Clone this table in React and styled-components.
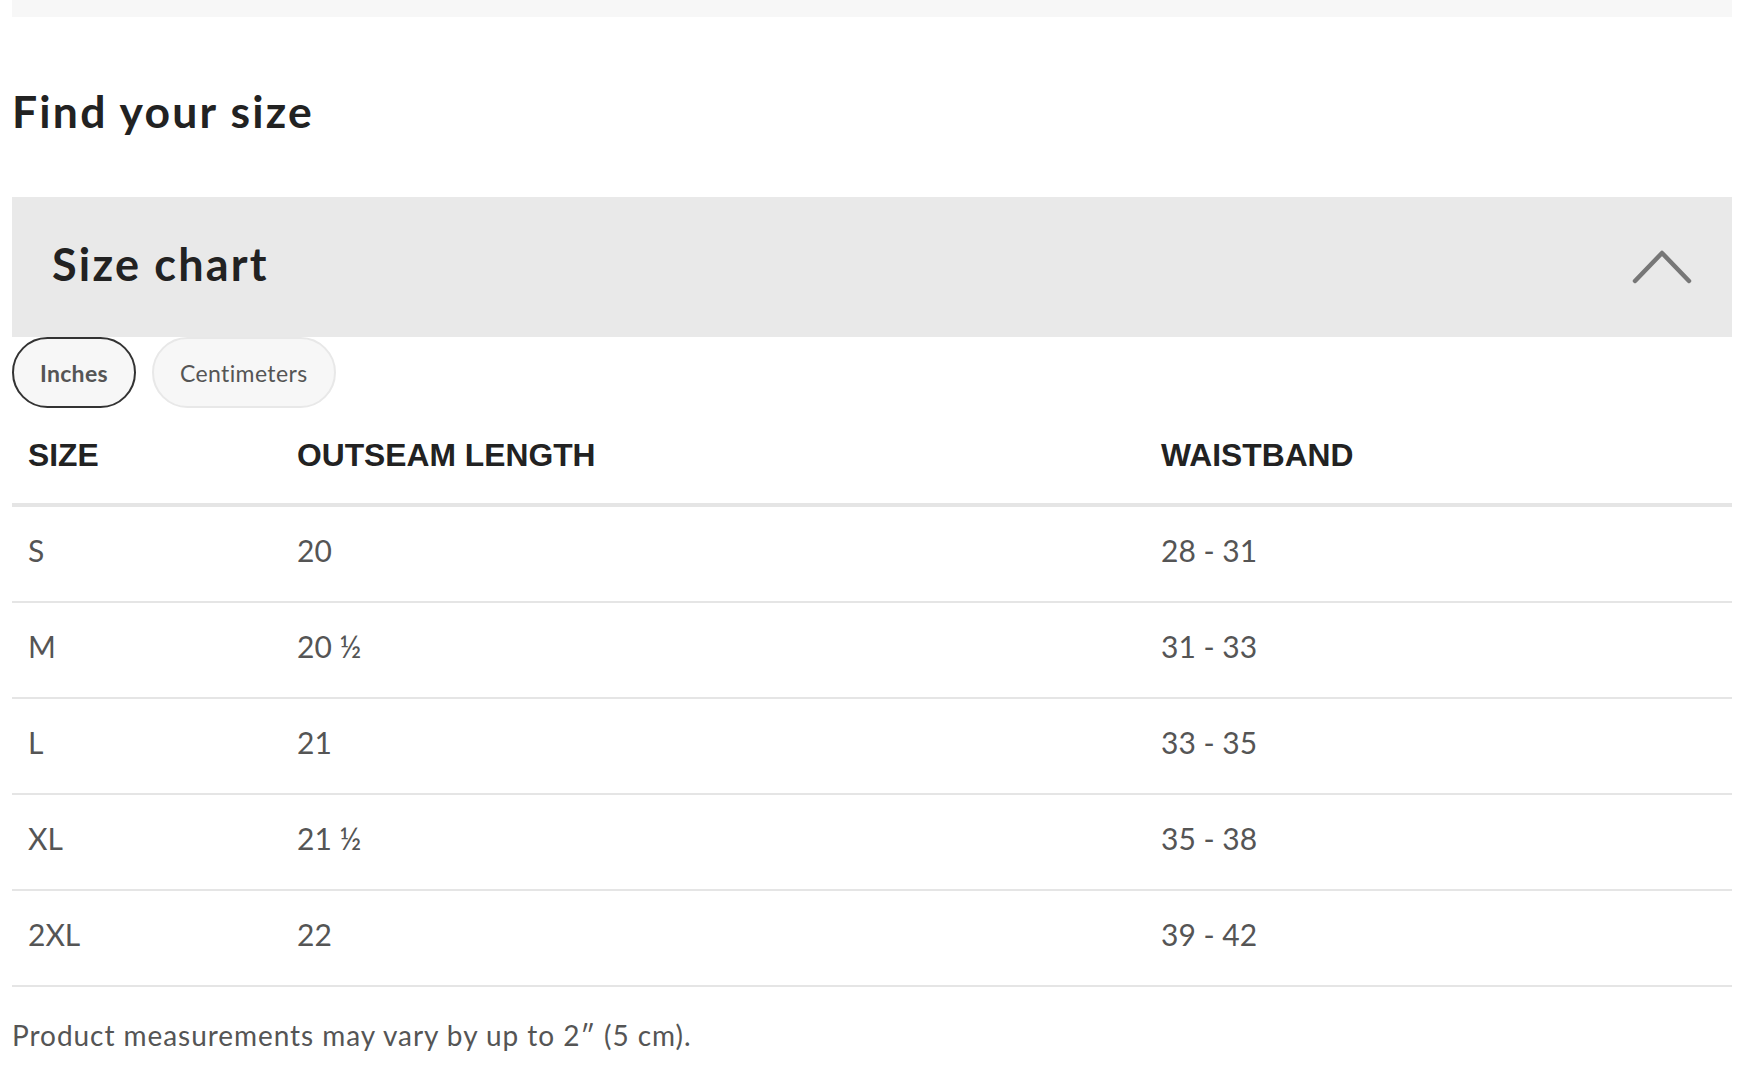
import React, { useState } from "react";
import styled, { createGlobalStyle } from "styled-components";

const GlobalStyle = createGlobalStyle`
  html, body { margin: 0; padding: 0; background: #ffffff; }
  body { font-family: Lato, "Open Sans", Arial, sans-serif; color: #222; }
  * { box-sizing: border-box; }
`;

const Page = styled.div`
  padding: 0 12px;
  display: flex;
  flex-direction: column;
`;

const TopBar = styled.div`
  height: 17px;
  background: #f7f7f7;
`;

const Title = styled.h2`
  margin: 67px 0 0 0;
  font-family: Lato, sans-serif;
  font-weight: 700;
  font-size: 44.5px;
  line-height: 1.2;
  color: #222;
  letter-spacing: 2.2px;
`;

const AccordionHeader = styled.div`
  margin-top: 60px;
  height: 140px;
  background: #e9e9e9;
  display: flex;
  align-items: center;
  justify-content: space-between;
  padding: 0 40px 0 40px;
`;

const AccordionTitle = styled.h3`
  margin: 0 0 7px 0;
  font-family: Lato, sans-serif;
  font-weight: 700;
  font-size: 45px;
  line-height: 1.2;
  color: #222;
  letter-spacing: 2.2px;
`;

const Chevron = styled.svg`
  width: 60px;
  height: 36px;
  display: block;
`;

const ToggleRow = styled.div`
  display: flex;
  gap: 16px;
`;

const Toggle = styled.button`
  height: 71px;
  padding: 0 26px;
  border-radius: 36px;
  background: #f7f7f7;
  border: ${(p) => (p.$active ? "2px solid #333" : "2px solid #e8e8e8")};
  font-family: Lato, sans-serif;
  font-size: 23px;
  font-weight: ${(p) => (p.$active ? 700 : 400)};
  letter-spacing: ${(p) => (p.$active ? "0.3px" : "0.4px")};
  color: #555;
  cursor: pointer;
`;

const Table = styled.div`
  display: flex;
  flex-direction: column;
`;

const Row = styled.div`
  display: grid;
  grid-template-columns: 269px 864px 1fr;
  align-items: center;
  height: ${(p) => (p.$head ? "99px" : "96px")};
  border-bottom: ${(p) => (p.$head ? "4px" : "2px")} solid #e5e5e5;
`;

const HeadCell = styled.div`
  padding-left: 16px;
  font-family: "Liberation Sans", Arial, sans-serif;
  font-weight: 700;
  font-size: 31.8px;
  color: #222;
`;

const Cell = styled.div`
  padding: 0 0 8px 16px;
  font-family: Lato, sans-serif;
  font-size: 30px;
  color: #555;
`;

const Note = styled.p`
  margin: 32px 0 0 0;
  font-family: Lato, sans-serif;
  font-size: 28px;
  line-height: 1.2;
  letter-spacing: 0.95px;
  color: #555;
`;

const rows = [
  ["S", "20", "28 - 31"],
  ["M", "20 ½", "31 - 33"],
  ["L", "21", "33 - 35"],
  ["XL", "21 ½", "35 - 38"],
  ["2XL", "22", "39 - 42"],
];

export default function App() {
  const [unit, setUnit] = useState("in");
  return (
    <>
      <GlobalStyle />
      <Page>
        <TopBar />
        <Title>Find your size</Title>
        <AccordionHeader>
          <AccordionTitle>Size chart</AccordionTitle>
          <Chevron viewBox="0 0 60 36" fill="none">
            <polyline
              points="3,32 30,4 57,32"
              stroke="#777"
              strokeWidth="4.5"
              strokeLinecap="round"
              strokeLinejoin="round"
            />
          </Chevron>
        </AccordionHeader>
        <ToggleRow>
          <Toggle $active={unit === "in"} onClick={() => setUnit("in")}>
            Inches
          </Toggle>
          <Toggle $active={unit === "cm"} onClick={() => setUnit("cm")}>
            Centimeters
          </Toggle>
        </ToggleRow>
        <Table>
          <Row $head>
            <HeadCell>SIZE</HeadCell>
            <HeadCell>OUTSEAM LENGTH</HeadCell>
            <HeadCell>WAISTBAND</HeadCell>
          </Row>
          {rows.map((r) => (
            <Row key={r[0]}>
              <Cell>{r[0]}</Cell>
              <Cell>{r[1]}</Cell>
              <Cell>{r[2]}</Cell>
            </Row>
          ))}
        </Table>
        <Note>Product measurements may vary by up to 2″ (5 cm).</Note>
      </Page>
    </>
  );
}
